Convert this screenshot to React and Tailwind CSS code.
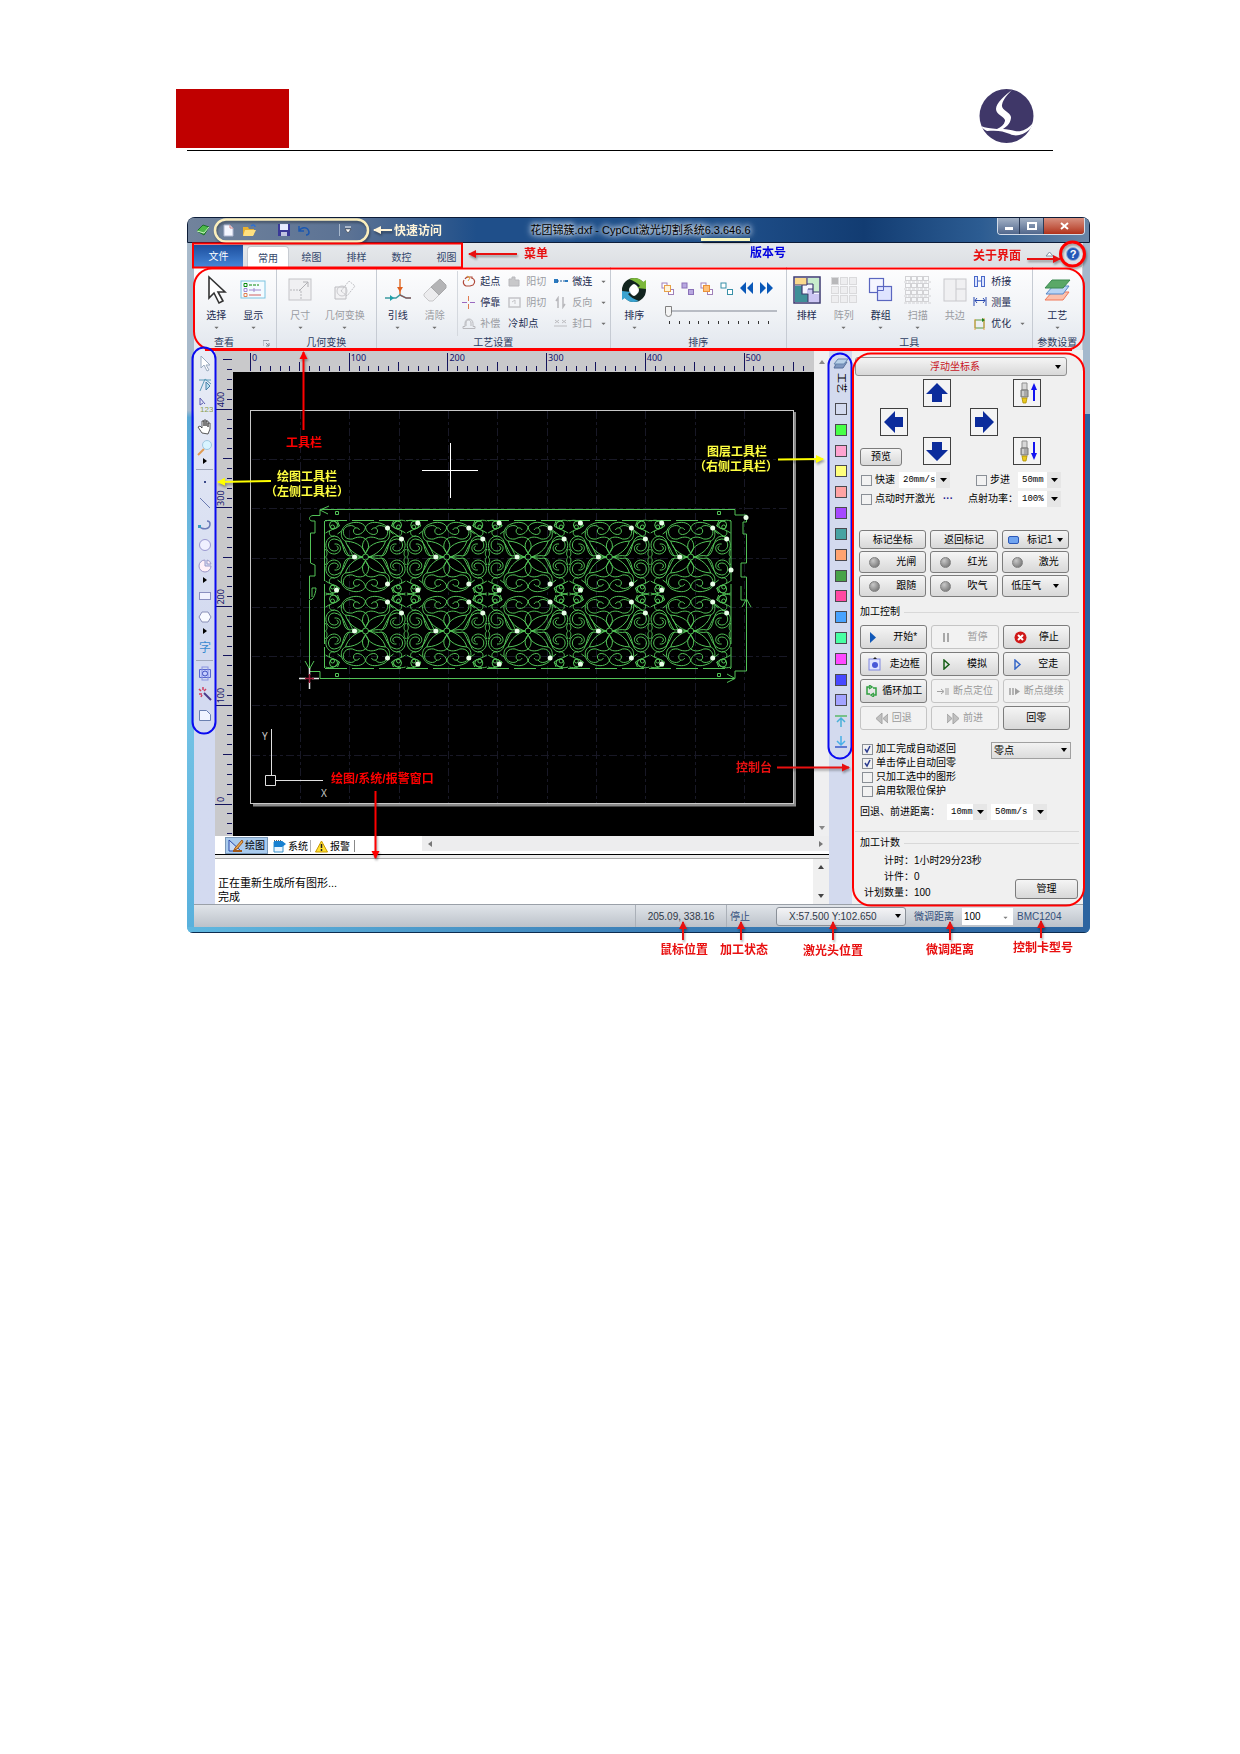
import { useState } from "react";
import { FaCaretDown } from "react-icons/fa";

const swatches = [
  "#d3daee", "#48ff48", "#ffa3d0", "#ffff7c", "#ffa3a3", "#a648ff", "#48a3a3", "#ffa370",
  "#48a348", "#ff48a3", "#48a3ff", "#48ffa3", "#ff48ff", "#4848ff", "#a3a3ff",
];

// rulers: 100 units are 98.7px wide
const hTicks = Array.from({ length: 57 }, (_, i) => i);
const vTicks = Array.from({ length: 49 }, (_, i) => i - 3);
const tickLen = (i) => (i % 10 === 0 ? 18 : i % 5 === 0 ? 9 : 5);

const tiles = [];
for (let r = 0; r < 2; r++) {
  for (let c = 0; c < 5; c++) {
    tiles.push({ x: 365.5 + c * 81.3, y: 557 + r * 74, c, r });
  }
}

function Icon({ w = 24, h = 24, children, className = "" }) {
  return (
    <svg width={w} height={h} viewBox={`0 0 ${w} ${h}`} fill="none" className={`shrink-0 ${className}`} aria-hidden="true">
      {children}
    </svg>
  );
}

/* ---------- ribbon icons ---------- */
const CursorIcon = () => (
  <Icon w={24} h={30}><path d="M5 2v21l5-5 5 10 4-2-5-9h7z" fill="#fff" stroke="#333" strokeWidth="1.6" /></Icon>
);
const ShowIcon = () => (
  <Icon w={26} h={20}>
    <rect x="1" y="1" width="24" height="17" fill="#f4fbff" stroke="#7cc3e0" />
    <path d="M4 3.500h3v3h-3z" stroke="#0a8a0a" /><path d="M9 5h3m1 0h3m1 0h2" stroke="#0a8a0a" />
    <path d="M4 8.500h3v3h-3z" stroke="#a08ad0" /><path d="M9 10h12M14 8v4" stroke="#a08ad0" />
    <path d="M4 13.500h3v3h-3z" stroke="#e08050" /><path d="M9 15h12" stroke="#d06060" />
  </Icon>
);
const SizeIcon = () => (
  <Icon w={24} h={24}>
    <rect x="1" y="1" width="22" height="21" fill="#f0f0f2" stroke="#c4c4c8" />
    <path d="M2 12h11v10" stroke="#b8b8bc" strokeDasharray="2 1" /><path d="M11 13l9-9m-5 0h5v5" stroke="#b0b0b4" />
  </Icon>
);
const TransformIcon = () => (
  <Icon w={24} h={24}>
    <path d="M2 9h11v12h-11z" fill="#f2f2f4" stroke="#bcbcc0" />
    <path d="M8 13l8-10 6 5-8 10z" stroke="#c0c0c4" strokeDasharray="2 1" />
    <circle cx="9" cy="13" r="5" stroke="#cacace" />
  </Icon>
);
const LeadIcon = () => (
  <Icon w={28} h={24}>
    <path d="M16 1v16" stroke="#e07030" strokeWidth="1.500" /><path d="M13 9h6l-3 5z" fill="#e06020" />
    <path d="M1 20h11l4-3 6 3h5" stroke="#3a9aa0" strokeWidth="1.500" /><path d="M16 17l6 3h5" stroke="#b04040" />
    <path d="M6 17v6l4-3z" fill="#20a0a8" />
  </Icon>
);
const EraserIcon = () => (
  <Icon w={26} h={26}>
    <path d="M2 17l7-7 8 8-6 6h-4l-5-5z" fill="#ececee" stroke="#c8c8ca" /><path d="M9 10l9-8 6 6v3l-7 7z" fill="#b4b4b6" stroke="#a8a8aa" />
  </Icon>
);
const SortIcon = () => (
  <Icon w={26} h={26}>
    <circle cx="13" cy="13" r="8.500" stroke="#12241f" strokeWidth="7" />
    <path d="M8 2c6-2 11-1 14 3l3-2v9l-9-1 3-2c-2-3-6-5-11-7z" fill="#7cb83a" />
    <path d="M18 24c-6 2-11 1-14-3l-3 2v-9l9 1-3 2c2 3 6 5 11 7z" fill="#3ba3d0" />
    <ellipse cx="13" cy="13" rx="3.500" ry="6" fill="#fff" />
  </Icon>
);
const NestIcon = () => (
  <Icon w={28} h={28}>
    <rect x="1" y="1" width="26" height="26" fill="#f4f4ff" stroke="#3c3a70" strokeWidth="1.500" />
    <path d="M2 2h12v7h-12z" fill="#fbd98c" /><path d="M15 2h11v14h-6v-8h-5z" fill="#c8eccc" />
    <path d="M2 10h7v8h6v8h-13z" fill="#3f8f98" /><path d="M14 13h6v5h6v8h-10v-9h-2z" fill="#cdc6f4" />
    <path d="M2 9h12M9 9v9h6v8M14 2v7M20 8v8h6M14 8h6M15 13h5v5" stroke="#3c3a70" strokeWidth="1.200" />
  </Icon>
);
const ArrayIcon = () => (
  <Icon w={26} h={26}>
    {[0, 9, 18].map((y) => [0, 9, 18].map((x) => (
      <rect key={`${x}-${y}`} x={x + 0.5} y={y + 0.5} width="7" height="7" fill={x + y === 0 ? "#b8b8ba" : "#eeeef0"} stroke="#dadadc" />
    )))}
  </Icon>
);
const GroupIcon = () => (
  <Icon w={26} h={26}>
    <rect x="1.500" y="1.500" width="14" height="14" fill="#f4f5ff" stroke="#5a66c0" strokeWidth="1.200" />
    <rect x="9.500" y="9.500" width="14" height="14" fill="#dfe4ff" stroke="#5a66c0" strokeWidth="1.200" />
    <path d="M9.500 13.500h6v-4" stroke="#5a66c0" />
  </Icon>
);
const ScanIcon = () => (
  <Icon w={28} h={28}>
    {[1, 8, 15, 22].map((y) => (
      <g key={y} stroke="#d2d2d5"><path d={`M0 ${y + 5}h28`} strokeDasharray="3 1" />
        {[1, 7, 13, 19].map((x) => <rect key={x} x={x + 0.5} y={y - 0.5} width="5" height="4" />)}</g>
    ))}
  </Icon>
);
const SharedEdgeIcon = () => (
  <Icon w={24} h={24}><rect x="1" y="1" width="22" height="22" fill="#f0f0f2" stroke="#c8c8cc" /><path d="M13 1v22M13 11h10" stroke="#c8c8cc" /></Icon>
);
const LayersIcon = () => (
  <Icon w={28} h={24}>
    <path d="M9 14h17l-6 8h-18z" fill="#fbc0ac" stroke="#f07858" /><path d="M10 8h16l-6 8h-17z" fill="#b8d4f4" stroke="#5888c8" />
    <path d="M9 2h18l-7 8h-18z" fill="#5aa868" stroke="#3a8a50" />
  </Icon>
);

const smallIcons = {
  起点: <><path d="M3 4a4 4 0 0 1 4-2h3v2M10 3a4 4 0 0 1 1 7l-3 1h-4a4 4 0 0 1-2-6" stroke="#b04a3a" strokeWidth="1.200" /><path d="M5 1l3 2-2 3" stroke="#e0a030" /></>,
  停靠: <><path d="M0 6.500h5m3 0h5" stroke="#9a6ac0" /><path d="M6.500 0v5m0 3v5" stroke="#e07a50" /></>,
  补偿: <path d="M1 11.500h12v-2h-2v-3c0-6-8-6-8 0v3h-2zM4 9v-3c0-4 5-4 5 0v3" stroke="#b8b8bc" />,
  阳切: <path d="M1 4h3v-2h3v3h4v6h-10z" fill="#c8c8ca" stroke="#b8b8bc" />,
  阴切: <><rect x="1" y="2" width="11" height="9" stroke="#c4c4c8" strokeWidth="1.500" /><path d="M4 6l3-2v4" stroke="#c4c4c8" /></>,
  微连: <><path d="M0 4h4v4h-4zM11 5h3v2h-3z" fill="#2a7ac0" /><path d="M3 6h9" stroke="#1a5a9a" strokeDasharray="2 1" /></>,
  反向: <path d="M4 12v-10l-2 3M9 1v10l2-3" stroke="#b8b8bc" strokeWidth="1.500" />,
  封口: <path d="M1 3l4 3m0-3l-4 3M8 3l4 3m0-3l-4 3M0 9h13" stroke="#bcbcc0" />,
  桥接: <><rect x="1.500" y="1.500" width="3" height="10" fill="#dce4ff" stroke="#4a68c8" /><rect x="8.500" y="1.500" width="3" height="10" fill="#dce4ff" stroke="#4a68c8" /><path d="M5 6h3" stroke="#4a68c8" /></>,
  测量: <path d="M1 1v9M13 1v9M2 4.500h10M4 2l-2 2.500 2 2.500M10 2l2 2.500-2 2.500" stroke="#2a4ab0" />,
  优化: <><path d="M2 3h9v8h-9z" stroke="#5a9a40" /><path d="M11 1v12M2 2v11" stroke="#e8a040" /><path d="M9 1l3 2-3 2" fill="#208020" /></>,
};

function Big({ icon, label, off, arrow = true, wide }) {
  return (
    <button type="button" className={`mt-1 flex flex-col items-center ${wide ? "w-[52px]" : "w-[37px]"} ${off ? "text-[#9a9ca2]" : "text-[#1c2c50]"}`}>
      <span className="flex h-[30px] items-center">{icon}</span>
      <span className="mt-1 leading-[14px]">{label}</span>
      {arrow && <FaCaretDown size={7} className="mt-px text-[#707070]" />}
    </button>
  );
}

function Small({ label, off, arrow, noIcon }) {
  return (
    <button type="button" className={`flex h-[21px] items-center gap-1 whitespace-nowrap ${off ? "text-[#9a9ca2]" : "text-[#1c2c50]"}`}>
      {!noIcon && <Icon w={14} h={13}>{smallIcons[label]}</Icon>}
      {label}
      {arrow && <FaCaretDown size={7} className="ml-1 text-[#707070]" />}
    </button>
  );
}

function Group({ title, size, launcher, children }) {
  return (
    <section className={`flex shrink-0 grow flex-col border-r border-[#c6cbd3] ${size}`}>
      <div className="flex h-[69px] justify-center pt-1">{children}</div>
      <div className={`flex items-center ${launcher ? "justify-between pr-1.5 pl-5" : "justify-center"}`}>
        <h2 className="leading-[14px] whitespace-nowrap text-[#2c3c60]">{title}</h2>
        {launcher && <button type="button" aria-label="查看选项"><Icon w={7} h={7}><path d="M0 6V.500h6" stroke="#98a0ac" /><path d="M3 3l3 3m0-3v3h-3" stroke="#808894" /></Icon></button>}
      </div>
    </section>
  );
}

function MiniSort({ ends, mid, fill, endFill = "#ffffff" }) {
  return (
    <button type="button" aria-label="排序方式">
      <Icon w={13} h={13}>
        <rect x="1" y="1" width="5" height="5" fill={endFill} stroke={ends} />
        <rect x="7.500" y="7.500" width="5" height="5" fill={endFill} stroke={ends} />
        {mid && <rect x="3.500" y="3.500" width="6" height="6" fill={fill} stroke={mid} />}
      </Icon>
    </button>
  );
}

function Ribbon() {
  const [speed, setSpeed] = useState(0);
  return (
    <div className="flex h-[83px] bg-linear-to-b from-[#fdfdfe] via-[#f2f4f7] to-[#e2e7ee] text-[10px]">
      <Group title="查看" size="basis-[82px]" launcher>
        <Big icon={<CursorIcon />} label="选择" />
        <Big icon={<ShowIcon />} label="显示" />
      </Group>
      <Group title="几何变换" size="basis-[100px]">
        <Big icon={<SizeIcon />} label="尺寸" off />
        <Big icon={<TransformIcon />} label="几何变换" off wide />
      </Group>
      <Group title="工艺设置" size="basis-[233px]">
        <Big icon={<LeadIcon />} label="引线" />
        <Big icon={<EraserIcon />} label="清除" off />
        <div className="ml-1 flex gap-2 border-l border-[#d4d8de] pl-1">
          <div>
            <Small label="起点" />
            <Small label="停靠" />
            <Small label="补偿" off />
          </div>
          <div>
            <Small label="阳切" off />
            <Small label="阴切" off />
            <Small label="冷却点" noIcon />
          </div>
          <div>
            <Small label="微连" arrow />
            <Small label="反向" off arrow />
            <Small label="封口" off arrow />
          </div>
        </div>
      </Group>
      <Group title="排序" size="basis-[176px]">
        <Big icon={<SortIcon />} label="排序" />
        <div className="mt-1 mr-2 ml-2 w-[112px]">
          <div className="flex h-[26px] items-center justify-between">
            <MiniSort ends="#a080b8" mid="#e8a048" fill="#fff4d8" />
            <MiniSort ends="#8a70b8" endFill="#b8a8e0" />
            <MiniSort ends="#a080b8" mid="#e89038" fill="#ffc078" />
            <MiniSort ends="#3890a8" />
            <button type="button" aria-label="上一个"><Icon w={13} h={12}><path d="M6 0v12l-6-6zM13 0v12l-6-6z" fill="#0a58b8" /></Icon></button>
            <button type="button" aria-label="下一个"><Icon w={13} h={12}><path d="M0 0v12l6-6zM7 0v12l6-6z" fill="#0a58b8" /></Icon></button>
          </div>
          <input
            type="range"
            aria-label="排序进度"
            min="0"
            max="10"
            value={speed}
            onChange={(e) => setSpeed(Number(e.target.value))}
            className="mt-1 ml-1 block h-3 w-full appearance-none bg-[linear-gradient(#b8bcc4,#b8bcc4)] bg-[length:100%_2px] bg-center bg-no-repeat [&::-webkit-slider-thumb]:h-[11px] [&::-webkit-slider-thumb]:w-[7px] [&::-webkit-slider-thumb]:appearance-none [&::-webkit-slider-thumb]:rounded-b-md [&::-webkit-slider-thumb]:border [&::-webkit-slider-thumb]:border-[#808080] [&::-webkit-slider-thumb]:bg-[#f4f4f4]"
          />
          <div className="mt-1 ml-1 flex justify-between px-1">
            {hTicks.slice(0, 11).map((i) => <i key={i} className="h-[3px] w-px bg-[#333]" />)}
          </div>
        </div>
      </Group>
      <Group title="工具" size="basis-[245px]">
        <Big icon={<NestIcon />} label="排样" arrow={false} />
        <Big icon={<ArrayIcon />} label="阵列" off />
        <Big icon={<GroupIcon />} label="群组" />
        <Big icon={<ScanIcon />} label="扫描" off />
        <Big icon={<SharedEdgeIcon />} label="共边" off arrow={false} />
        <div className="mr-1">
          <Small label="桥接" />
          <Small label="测量" />
          <Small label="优化" arrow />
        </div>
      </Group>
      <Group title="参数设置" size="basis-[50px]">
        <Big icon={<LayersIcon />} label="工艺" />
      </Group>
    </div>
  );
}

/* ---------- title bar and menu ---------- */
function TitleBar() {
  return (
    <header className="flex h-[26px] items-center rounded-t-md border border-[#0c1c38] bg-[linear-gradient(90deg,#71839c_0%,#5b7294_18%,#1f4f8a_32%,#1f4f8a_60%,#123c72_75%,#2c5c92_88%,#6885a5_100%)] text-[10px]">
      <div className="flex flex-1 items-center pl-2">
        <Icon w={14} h={14}><path d="M1 8l6-6 6 2-5 8z" fill="#4db848" stroke="#187028" /><path d="M1 8l7 2 5-6" stroke="#c8f0c0" /></Icon>
        <button type="button" aria-label="新建" className="ml-3"><Icon w={12} h={14}><path d="M2 2h6l3 3v8h-9z" fill="#f4f6ff" stroke="#b0b8d0" /><path d="M8 2v3h3" stroke="#d08080" /></Icon></button>
        <button type="button" aria-label="打开" className="ml-2"><Icon w={15} h={14}><path d="M1 4h5l1 2h5v6h-11z" fill="#e8b030" /><path d="M3 7h11l-3 6h-10z" fill="#ffe080" /><path d="M9 3c2-2 4-1 4 1" stroke="#3070d0" strokeWidth="1.500" /></Icon></button>
        <button type="button" aria-label="保存" className="ml-5"><Icon w={14} h={14}><path d="M1 1h12v12h-12z" fill="#3a3a98" /><path d="M3 1h8v6h-8z" fill="#e8ecff" /><path d="M4 9h6v4h-6z" fill="#c0c4e0" /></Icon></button>
        <button type="button" aria-label="撤销" className="ml-1.5"><Icon w={14} h={12}><path d="M2 2v5h5M2 7c3-5 9-4 10 1 0 2-1 3-3 3" stroke="#1c58b0" strokeWidth="1.500" /></Icon></button>
        <span className="ml-7 h-3 w-px bg-[#a8b8cc]" />
        <button type="button" aria-label="自定义" className="ml-1"><Icon w={8} h={8}><path d="M1 1h6" stroke="#fff" /><path d="M1 3h6l-3 4z" fill="#fff" stroke="#222" strokeWidth="0.500" /></Icon></button>
      </div>
      <h1 className="text-[11px] leading-4 whitespace-nowrap text-black [text-shadow:0_0_5px_#ffffff,0_0_6px_#dce8f4,0_0_9px_#c8d8ec]">花团锦簇.dxf - CypCut激光切割系统6.3.646.6</h1>
      <div className="flex flex-1 justify-end self-start pr-1">
        <div className="flex h-[17px] overflow-hidden rounded-b border border-t-0 border-[#d4dce8]">
          <button type="button" aria-label="最小化" className="flex w-[22px] items-center justify-center border-r border-[#2c3c58] bg-linear-to-b from-[#a4b2c6] to-[#52688c]"><i className="mt-1 h-[3px] w-2 bg-white" /></button>
          <button type="button" aria-label="最大化" className="flex w-6 items-center justify-center border-r border-[#2c3c58] bg-linear-to-b from-[#a4b2c6] to-[#52688c]"><i className="h-2 w-[10px] border-2 border-white" /></button>
          <button type="button" aria-label="关闭" className="flex w-10 items-center justify-center bg-linear-to-b from-[#d89080] to-[#b03018]"><Icon w={9} h={8}><path d="M1 1l7 6M8 1l-7 6" stroke="#fff" strokeWidth="2" /></Icon></button>
        </div>
      </div>
    </header>
  );
}

function MenuTabs() {
  return (
    <nav className="flex h-6 items-end bg-linear-to-b from-[#e6e9ec] to-[#dcdfe3] text-[10px] text-[#34486c]">
      <button type="button" className="mr-1 h-[22px] w-[49px] bg-linear-to-b from-[#1d4f9e] to-[#4686d8] text-white">文件</button>
      <button type="button" className="h-[21px] w-[42px] rounded-t-sm border border-b-0 border-[#c8ccd2] bg-white pt-0.5">常用</button>
      {["绘图", "排样", "数控", "视图"].map((t) => (
        <button key={t} type="button" className="h-[21px] w-[45px] pt-0.5">{t}</button>
      ))}
      <span className="flex-1" />
      <button type="button" aria-label="收起" className="mr-3 mb-2.5"><Icon w={9} h={6}><path d="M1 5l3.500-4 3.500 4z" fill="#fff" stroke="#8090a0" /></Icon></button>
      <button type="button" aria-label="关于" className="mr-[3px] mb-1.5 size-[14px] rounded-full border border-[#9ab4dc] bg-[#2458b8] text-[11px] leading-3 font-bold text-white">?</button>
    </nav>
  );
}

/* ---------- side tool bars ---------- */
const tools = [
  ["选择", <path d="M4 1v12l3-3 3 6 2-1-3-5h4z" fill="#fff" stroke="#9aaabe" />],
  ["节点", <><path d="M2 4h12M3 15L8 3l6 5" stroke="#5a9ab8" /><path d="M9 6v8l4-4z" fill="#b8e0f0" stroke="#4a80a8" /></>],
  ["次序", <><path d="M3 1v7l3-2M3 1l5 6" stroke="#5a5ab0" /><text x="3" y="15" fontSize="8" fill="#8aa050">123</text></>],
  ["平移", <path d="M5 15L1 9l2-1 2 2V3h2v5-6h2v6-5h2v6-4h2v6l-2 5z" fill="#fff" stroke="#333" strokeWidth="0.800" />],
  ["缩放", <><path d="M1 16l6-6" stroke="#e09a50" strokeWidth="2" /><circle cx="10" cy="6" r="4.500" fill="#d8f4ff" stroke="#a0c8e0" /></>, 1],
  "-",
  ["点", <rect x="7" y="7" width="2" height="2" fill="#3a4a8a" />],
  ["直线", <path d="M3 3l10 10" stroke="#6a7ab0" />],
  ["圆弧", <><path d="M2 10c3 4 11 4 11-2 0-2-1-3-3-3" stroke="#6a7ab8" strokeWidth="1.500" /><path d="M1 9h3v3h-3z" fill="#3a9ac0" /></>],
  ["圆", <circle cx="8" cy="8" r="5.500" fill="#f0f0ff" stroke="#9a98d0" />],
  ["扇形", <path d="M8 8V2a6 6 0 1 0 6 6zM10 6V2a5 5 0 0 1 4 4z" fill="#fff0f8" stroke="#9a98c8" />, 1],
  ["矩形", <rect x="2.500" y="4.500" width="11" height="7" fill="#f0f2ff" stroke="#8a90c0" />],
  ["多边形", <path d="M5 3h6l3 5-3 5h-6l-3-5z" fill="#f8faff" stroke="#8a90b8" />, 1],
  ["文字", <text x="2" y="13" fontSize="12" fill="#3a8ad0">字</text>],
  "-",
  ["阵列", <><path d="M2.500 4.500h11v8h-11z" fill="#c8d0ff" stroke="#5a68d0" /><rect x="5" y="2" width="6" height="13" stroke="#8a94e0" /><circle cx="8" cy="8.500" r="2.500" stroke="#4050c0" /></>],
  ["魔棒", <><path d="M7 7l7 7" stroke="#4a3a8a" strokeWidth="2" /><path d="M2 3l2 2M6 1v3M2 8h3M9 3l-2 2M4 11l1-2" stroke="#d04060" strokeWidth="1.500" /></>],
  ["倒角", <path d="M2.500 3.500h7l4 4v6h-11z" fill="#f0f4ff" stroke="#6a80b0" />],
];

function ToolBar() {
  return (
    <aside className="flex w-[21px] shrink-0 flex-col items-center bg-linear-to-b from-[#e8ecf6] via-[#d3daf0] to-[#d3daf0] pt-[3px]">
      {tools.map((t, i) =>
        t === "-" ? (
          <hr key={i} className="my-0.5 w-[17px] border-[#a0a8bc]" />
        ) : (
          <div key={i} className="flex flex-col items-center">
            <button type="button" aria-label={t[0]} className="flex h-[21px] items-center"><Icon w={16} h={17}>{t[1]}</Icon></button>
            {t[2] && <span className="h-[9px]"><Icon w={4} h={6}><path d="M0 0v6l4-3z" fill="#000" /></Icon></span>}
          </div>
        )
      )}
    </aside>
  );
}

function LayerBar() {
  return (
    <aside className="flex w-[23px] shrink-0 flex-col items-center bg-[#d3daee] pt-2 text-[10px]">
      <Icon w={15} h={11}><path d="M4 4h10l-4 6h-9z" fill="#8098c0" stroke="#58709c" /><path d="M5 1h10l-4 5h-10z" fill="#b8d0e8" stroke="#6888b0" /></Icon>
      <span className="mt-1 h-[26px] leading-3 [text-orientation:sideways] [writing-mode:vertical-rl]">工艺</span>
      <div className="mt-1 flex h-[345px] flex-col items-center justify-between">
        {swatches.map((c) => (
          <button key={c} type="button" aria-label={`图层 ${c}`} className="size-3 border border-[#4a4a50]" style={{ backgroundColor: c }} />
        ))}
        <button type="button" aria-label="上移"><Icon w={12} h={12}><path d="M0 1h12" stroke="#58b868" strokeWidth="1.500" /><path d="M6 12V3M2 7l4-4 4 4" stroke="#48b0d8" strokeWidth="1.500" /></Icon></button>
        <button type="button" aria-label="下移"><Icon w={12} h={12}><path d="M0 11h12" stroke="#3858c8" strokeWidth="1.500" /><path d="M6 0v9M2 5l4 4 4-4" stroke="#48b0e8" strokeWidth="1.500" /></Icon></button>
      </div>
    </aside>
  );
}

/* ---------- drawing ---------- */
function Drawing() {
  return (
    <svg viewBox="215 350 599 486" className="block h-auto w-full" fill="none" fontFamily="'Noto Sans', sans-serif">
      <defs>
        <g id="quarter">
          <path d="M0-3C-1-8-6-15-20-16C-18-8-10-2-3 0" />
          <path d="M0-4C-4-8-4-14 0-18" />
          <path d="M-3 0C-9-1-12-2-16-1C-25-2-20-20-31-21C-43-20-42-3-31-3C-23-4-23-14-31-13" />
          <path d="M-16-1C-21-5-21-17-31-18C-39-18-39-6-31-6C-27-6-26-10-29-11" />
          <path d="M-20-16C-26-18-26-30-17-33C-10-36-3-35 0-30C-1-22-12-20-12-26C-12-30-7-30-6-27" />
          <path d="M0-18C-4-21-9-20-13-18C-20-17-23-22-22-27C-20-32-12-33-10-29" />
          <circle cx="-32" cy="-32" r="4" /><circle cx="-33" cy="-30" r="2" />
          <path d="M-40-24C-36-27-30-28-26-31L-28-36M-40-36C-34-38-30-36-26-31M-40-8C-38-4-38-2-40 0" />
          <path d="M-24-26L-28-23M-36-26C-37-22-34-20-31-21" />
        </g>
        <g id="tile">
          <use href="#quarter" />
          <use href="#quarter" transform="scale(-1 1)" />
          <use href="#quarter" transform="scale(1 -1)" />
          <use href="#quarter" transform="scale(-1 -1)" />
          <circle r="3" />
        </g>
      </defs>
      <rect x="215" y="350" width="599" height="486" fill="#c9c9cb" />
      <rect x="233" y="372" width="581" height="464" fill="#000" />

      <g stroke="#14145c">
        {hTicks.map((i) => <path key={i} d={`M${Math.round(251 + i * 9.87) - 0.5} 371v-${tickLen(i)}`} />)}
        {vTicks.map((i) => <path key={i} d={`M232 ${Math.round(804.5 - i * 9.87) - 0.5}h-${i < 46 ? tickLen(i) : 5}`} />)}
      </g>
      <g fill="#14146c" fontSize="9">
        {[0, 1, 2, 3, 4, 5].map((n) => <text key={n} x={252 + n * 98.7} y="361">{n * 100}</text>)}
        {[0, 1, 2, 3, 4].map((n) => (
          <text key={n} transform={`translate(224 ${802 - n * 98.7}) rotate(-90)`}>{n * 100}</text>
        ))}
      </g>

      <g stroke="#181826" strokeDasharray="8 3 3 3">
        {[1, 2, 3, 4, 5, 6, 7, 8, 9, 10].map((n) => <path key={n} d={`M${Math.round(250.5 + n * 49.35)}.5 411V803`} />)}
        {[1, 2, 3, 4, 5, 6, 7].map((n) => <path key={n} d={`M252 ${Math.round(804 - n * 49.3)}.5H790`} />)}
      </g>
      <path d="M253 805h541.500V412" stroke="#8a8a8a" strokeWidth="3" />
      <rect x="250.500" y="410.500" width="543" height="393" stroke="#c8c8c8" />

      <g stroke="#52c257">
        <path d="M320 509.500H735V515H746.500V522H743V534H746.500V563H741V577H746.500V600H741V586M746.500 600V671H735V678.500H320V671.500H309" />
        <path d="M320 509.500V515.500H313C308 516 309 521 312 521H315V533H310.500V563L315 565V576H309.500V599C313 602 316 592 316 588H312V597M309.500 600V668" />
        <path d="M329 506L320 510l8 4M305 661l4.500 8 4.500-8M727 674l8 4.500-8 4M742 607l4.500-8 4.500 8" />
        <path d="M324.500 521V668M731 521V668" strokeDasharray="60 3" />
        <path d="M325 520.500H731M325 668.500H731" strokeDasharray="22 5" />
        <path d="M335.500 511.500h3v3h-3zM335.500 673.500h3v3h-3zM717.500 511.500h3v3h-3zM717.500 673.500h3v3h-3z" />
        {tiles.map((t) => <use key={`${t.x}-${t.y}`} href="#tile" x={t.x} y={t.y} />)}
        {tiles.map((t) => <path key={`${t.x}-${t.y}-lead`} d={`M${t.x - 18} ${t.y - 12}l6 12M${t.x + 23} ${t.y - 28}l12 9`} />)}
      </g>
      <g fill="#e8ffe8">
        {tiles.map((t) => (
          <g key={`${t.x}-${t.y}`} transform={`translate(${t.x} ${t.y})`}>
            <circle cx="-11" cy="0" r="2.500" />
            <circle cx="22" cy="-29" r="2.500" />
            <circle cx="36" cy="-18" r="2.500" />
            <circle cx="22" cy="27" r="2.500" />
            {(t.r === 0 || t.c > 0) && <circle cx="-29" cy="33" r="2.500" />}
            {t.r === 0 && t.c > 0 && <circle cx="-29" cy="-34" r="2.500" />}
          </g>
        ))}
        <circle cx="746" cy="517.500" r="2.500" />
        <circle cx="731" cy="570" r="2.500" />
      </g>

      <path d="M422 470.500H478M450.500 443V498" stroke="#fff" />
      <path d="M299 678.500h7m6 0h7M309.500 668v7m0 7v7" stroke="#e8e8e8" strokeWidth="1.500" />
      <path d="M305 678.500h9M309.500 674v9" stroke="#a02040" strokeWidth="1.500" />
      <path d="M271.500 729V775M276 780.500H323M265.500 775.500h10v10h-10z" stroke="#e0e0e0" />
      <g fill="#c8c8c8" fontSize="10"><text x="262" y="740">Y</text><text x="321" y="797">X</text></g>
    </svg>
  );
}

function Console() {
  return (
    <div className="flex flex-1 flex-col bg-white">
      <div className="flex h-[19px] border-b border-black text-[10px]">
        <div className="flex items-end pl-[10px]">
          <button type="button" className="flex h-[17px] items-center gap-px border border-[#7a98b8] bg-[#a9cbee] px-0.5"><Icon w={16} h={14}><path d="M1 1v11h12z" fill="#c8dcf8" stroke="#2848a8" /><path d="M14 1l-7 8-1 2 3-1 6-7z" fill="#e8a850" stroke="#a05818" /><path d="M5 12h9" stroke="#a05818" strokeWidth="2" /></Icon>绘图</button>
          <button type="button" className="mb-0.5 ml-1 flex h-3 items-center gap-0.5 border-r border-[#b0b0b0] pr-0.5"><Icon w={14} h={14}><path d="M2 3h9v10h-9z" fill="#e8f4ff" stroke="#3890c8" /><path d="M2 2h8l4 3-4 3h-8z" fill="#1880d0" /><path d="M2 1.500h8" stroke="#666" strokeDasharray="1 1" /></Icon>系统</button>
          <button type="button" className="mb-0.5 ml-1 flex h-3 items-center gap-0.5 border-r border-[#888] pr-1"><Icon w={13} h={13}><path d="M6.500 1l6 11h-12z" fill="#ffe030" stroke="#c89800" /><path d="M6.500 4v4m0 1v2" stroke="#222" strokeWidth="1.500" /></Icon>报警</button>
        </div>
        <div className="ml-[67px] flex h-[15px] flex-1 items-center justify-between bg-[#ededee] px-1.5">
          <Icon w={4} h={6}><path d="M4 0v6l-4-3z" fill="#777" /></Icon>
          <Icon w={4} h={6}><path d="M0 0v6l4-3z" fill="#777" /></Icon>
        </div>
      </div>
      <div className="h-1 border-b border-[#a8a8a8] bg-[#ececec]" />
      <div className="flex flex-1">
        <p className="flex-1 pt-[17px] pl-[3px] text-[11px] leading-[14px] text-black">正在重新生成所有图形...<br />完成</p>
        <div className="flex w-4 flex-col items-center justify-between bg-[#f0f0f0] py-1.5">
          <Icon w={6} h={4}><path d="M0 4h6l-3-4z" fill="#444" /></Icon>
          <Icon w={6} h={4}><path d="M0 0h6l-3 4z" fill="#444" /></Icon>
        </div>
      </div>
    </div>
  );
}

/* ---------- control panel ---------- */
function Drop({ label, value, size = "" }) {
  return (
    <span className={`relative flex h-4 items-center bg-white ${size}`}>
      <select aria-label={label} className="h-full w-full appearance-none pl-1 font-['Liberation_Mono','Noto_Sans_CJK_SC',monospace] text-[9px] leading-4">
        <option>{value}</option>
      </select>
      <span className="pointer-events-none absolute right-0 flex h-full w-[14px] items-center justify-center bg-[#e6e6e6]"><Icon w={7} h={4}><path d="M0 0h7l-3.500 4z" fill="#000" /></Icon></span>
    </span>
  );
}

function Check({ label, on }) {
  return (
    <label className="flex h-[14px] items-center gap-[3px] whitespace-nowrap">
      <span className="grid place-items-center">
        <input type="checkbox" defaultChecked={on} className="peer size-[11px] appearance-none border border-[#8a8f96] bg-[#f2f2f2] [grid-area:1/1]" />
        <svg width="9" height="9" viewBox="0 0 9 9" fill="none" className="pointer-events-none hidden [grid-area:1/1] peer-checked:block"><path d="M2 4l2 3 3-6" stroke="#2c3c90" strokeWidth="1.500" /></svg>
      </span>
      {label}
    </label>
  );
}

function Btn({ children, off, h = "h-6" }) {
  return (
    <button type="button" className={`flex items-center justify-center gap-1 rounded-[3px] border whitespace-nowrap ${h} ${off ? "border-[#c4c4c4] bg-[#f2f2f2] text-[#9a9a9a]" : "border-[#7c7c7c] bg-linear-to-b from-[#f5f5f5] to-[#d8d8d8] text-black"}`}>
      {children}
    </button>
  );
}

function Arrow({ label, turn, pos }) {
  return (
    <button type="button" aria-label={label} className={`flex size-7 items-center justify-center border border-[#404040] bg-[#f4f4f4] ${pos}`}>
      <svg width="24" height="22" viewBox="0 0 24 22" className={turn}><path d="M12 1l11 11h-6v8h-10v-8h-6z" fill="#0c2c9c" /></svg>
    </button>
  );
}

function Head({ label, down, pos }) {
  return (
    <button type="button" aria-label={label} className={`flex size-7 items-center justify-center border border-[#404040] bg-[#f4f4f4] ${pos}`}>
      <Icon w={22} h={24}>
        <path d="M6 2h5v7h-5z" fill="#d8d8d8" stroke="#909090" /><path d="M5 9h7v7h-7z" fill="#a8a8a8" stroke="#787878" /><path d="M7 10v5" stroke="#f0f0f0" /><path d="M6 17h5l-1 5h-3z" fill="#e8c820" stroke="#b09000" strokeWidth="0.800" />
        <path d={down ? "M18 3v13" : "M18 20V7"} stroke="#1414f0" strokeWidth="2" /><path d={down ? "M15 14h6l-3 7z" : "M15 9h6l-3-7z"} fill="#1414f0" />
      </Icon>
    </button>
  );
}

const Lamp = () => <span className="mr-3 size-[11px] rounded-full border border-[#808080] bg-radial-[at_35%_30%] from-[#c8c8c8] to-[#686868]" />;
const Caret = () => <Icon w={6} h={4}><path d="M0 0h6l-3 4z" fill="#000" /></Icon>;

function ControlPanel() {
  return (
    <section className="w-[231px] shrink-0 bg-[#f0f0f0] pr-1 pl-[3px] text-[10px] leading-[14px] text-black">
      <div className="relative mt-[7px] mr-3">
        <select aria-label="坐标系" className="h-[19px] w-full appearance-none rounded-[3px] border border-[#909090] bg-linear-to-b from-[#f5f5f5] to-[#d8d8d8] pr-3 text-center text-[#c8141e] [text-align-last:center]">
          <option>浮动坐标系</option>
        </select>
        <span className="pointer-events-none absolute top-2 right-1.5"><Caret /></span>
      </div>

      <div className="mt-[3px] ml-[5px] grid grid-cols-[63px_47px_43px_28px] grid-rows-[29px_29px_29px]">
        <Arrow label="上" turn="" pos="col-start-2 row-start-1" />
        <Head label="抬头" pos="col-start-4 row-start-1" />
        <Arrow label="左" turn="-rotate-90" pos="col-start-1 row-start-2 ml-5" />
        <Arrow label="右" turn="rotate-90" pos="col-start-3 row-start-2" />
        <button type="button" className="col-start-1 row-start-3 h-[18px] w-[42px] self-end rounded-[3px] border border-[#7c7c7c] bg-linear-to-b from-[#f5f5f5] to-[#d8d8d8]">预览</button>
        <Arrow label="下" turn="rotate-180" pos="col-start-2 row-start-3" />
        <Head label="落头" down pos="col-start-4 row-start-3" />
      </div>

      <div className="mt-1.5 flex h-4 items-center justify-between pr-[18px] pl-1.5">
        <div className="flex items-center gap-1"><Check label="快速" /><Drop label="点动速度" value="20mm/s" size="w-[51px]" /></div>
        <div className="flex items-center gap-2"><Check label="步进" /><Drop label="步进距离" value="50mm" size="w-[43px]" /></div>
      </div>
      <div className="mt-[3px] flex h-4 items-center justify-between pr-[18px] pl-1.5">
        <div className="flex items-center gap-2"><Check label="点动时开激光" /><button type="button" aria-label="更多" className="font-bold text-[#1c1c90]">···</button></div>
        <div className="flex items-center"><span>点射功率：</span><Drop label="点射功率" value="100%" size="w-[43px]" /></div>
      </div>

      <div className="mt-[23px] mr-[10px] ml-1 grid grid-cols-3 gap-x-1 gap-y-0.5">
        <Btn h="h-[19px]">标记坐标</Btn>
        <Btn h="h-[19px]">返回标记</Btn>
        <Btn h="h-[19px]"><i className="mr-1 h-2 w-[11px] rounded-xs border border-[#2c58b8] bg-[#70a4f0]" />标记1<Caret /></Btn>
        {["光闸", "红光", "激光", "跟随", "吹气"].map((t) => <Btn key={t} h="h-[22px]"><Lamp />{t}</Btn>)}
        <Btn h="h-[22px]">低压气<span className="ml-2"><Caret /></span></Btn>
      </div>

      <h2 className="mt-2 flex items-center gap-1 pl-[5px] after:h-px after:flex-1 after:bg-[#d8d8d8]">加工控制</h2>
      <div className="mt-1.5 mr-[9px] ml-[5px] grid grid-cols-3 gap-x-1 gap-y-[3px]">
        <Btn><Icon w={7} h={11} className="mr-3"><path d="M0 0l6 5.500-6 5.500z" fill="#1058b8" /></Icon>开始*</Btn>
        <Btn off><Icon w={9} h={9} className="mr-3"><path d="M1 0h2v9h-2zM5 0h2v9h-2z" fill="#a8a8a8" /></Icon>暂停</Btn>
        <Btn><Icon w={13} h={13} className="mr-2"><circle cx="6.500" cy="6.500" r="6" fill="#d01818" /><path d="M4 4l5 5m0-5l-5 5" stroke="#fff" strokeWidth="2" /></Icon>停止</Btn>
        <Btn><Icon w={14} h={14} className="mr-1"><rect x="1" y="2" width="11" height="11" fill="#e0e4ff" stroke="#8088e0" /><circle cx="7" cy="8" r="3" fill="#4858d8" /><path d="M5 2h4l-2-2" fill="#222" /></Icon>走边框</Btn>
        <Btn><Icon w={8} h={11} className="mr-3"><path d="M1 1l5 4.500-5 4.500z" stroke="#186018" strokeWidth="1.500" /></Icon>模拟</Btn>
        <Btn><Icon w={8} h={11} className="mr-3"><path d="M1 1l5 4.500-5 4.500z" stroke="#3868c8" strokeWidth="1.500" /></Icon>空走</Btn>
        <Btn><Icon w={13} h={12}><path d="M5 2h-3v7h3M8 10h3v-7h-3M4 0l3 2-3 2M9 8l-3 2 3 2" stroke="#30a040" strokeWidth="1.500" /></Icon>循环加工</Btn>
        <Btn off><Icon w={12} h={9}><path d="M0 4.500h6M4 2l3 2.500-3 2.500M9 1v7M11 1v7" stroke="#a0a0a0" /></Icon>断点定位</Btn>
        <Btn off><Icon w={11} h={9}><path d="M1 1v7M4 1v7" stroke="#a0a0a0" strokeWidth="1.500" /><path d="M6 1l5 3.500-5 3.500z" fill="#a0a0a0" /></Icon>断点继续</Btn>
        <Btn off><Icon w={12} h={11}><path d="M6 0v11l-6-5.500zM12 1v9l-5-4.500z" fill="#c0c0c0" stroke="#a4a4a4" /></Icon>回退</Btn>
        <Btn off><Icon w={12} h={11}><path d="M6 0v11l6-5.500zM0 1v9l5-4.500z" fill="#c0c0c0" stroke="#a4a4a4" /></Icon>前进</Btn>
        <Btn>回零</Btn>
      </div>

      <div className="mt-3 flex justify-between pr-2 pl-[7px]">
        <div>
          <Check label="加工完成自动返回" on />
          <Check label="单击停止自动回零" on />
          <Check label="只加工选中的图形" />
          <Check label="启用软限位保护" />
        </div>
        <span className="relative h-[17px]">
          <select aria-label="返回点" className="h-[17px] w-20 appearance-none border border-[#a0a0a0] bg-linear-to-b from-[#f2f2f2] to-[#dcdcdc] pl-0.5 leading-3"><option>零点</option></select>
          <span className="pointer-events-none absolute top-1.5 right-1"><Caret /></span>
        </span>
      </div>
      <div className="mt-[5px] flex h-[17px] items-center pl-[5px]">
        <span className="w-[87px]">回退、前进距离：</span>
        <Drop label="回退距离" value="10mm" size="w-10" />
        <span className="w-1" />
        <Drop label="回退速度" value="50mm/s" size="w-14" />
      </div>

      <hr className="mt-[11px] border-[#d8d8d8]" />
      <h2 className="mt-1 flex items-center gap-1 pl-[5px] after:h-px after:flex-1 after:bg-[#d8d8d8]">加工计数</h2>
      <div className="flex items-end justify-between pr-px pl-[5px]">
        <dl className="grid grid-cols-[54px_auto] pt-[3px] leading-4">
          <dt className="text-right">计时：</dt><dd>1小时29分23秒</dd>
          <dt className="text-right">计件：</dt><dd>0</dd>
          <dt className="text-right">计划数量：</dt><dd>100</dd>
        </dl>
        <button type="button" className="mb-0.5 h-5 w-[63px] rounded-[3px] border border-[#7c7c7c] bg-linear-to-b from-[#f5f5f5] to-[#d8d8d8]">管理</button>
      </div>
    </section>
  );
}

function StatusBar() {
  return (
    <footer className="flex h-[23px] items-center justify-end border-t border-[#9aa0a8] bg-linear-to-b from-[#e0e4e9] to-[#bcc2ca] text-[10px] text-[#34507c]">
      <span className="flex h-full w-[91px] items-center justify-center border-l border-[#aab0b8] text-[#303848]">205.09, 338.16</span>
      <span className="flex h-full w-12 items-center border-l border-[#aab0b8] pl-[3px]">停止</span>
      <button type="button" className="ml-0.5 flex h-[19px] w-[130px] items-center justify-between rounded-[3px] border border-[#8a9098] bg-linear-to-b from-[#f4f4f6] to-[#d4d8de] pr-1 pl-3 text-[#303848]">X:57.500 Y:102.650<Caret /></button>
      <label htmlFor="jog" className="ml-2 w-[48px]">微调距离</label>
      <span className="relative">
        <input id="jog" defaultValue="100" className="h-[17px] w-[51px] bg-white px-0.5 text-black" />
        <FaCaretDown size={7} className="absolute top-1.5 right-1 text-[#808080]" />
      </span>
      <span className="w-[70px] pl-1">BMC1204</span>
    </footer>
  );
}

/* ---------- callouts over the window ---------- */
const callouts = [
  { text: "快速访问", x: 394, y: 235, color: "#fff4d8", from: [392, 230], to: [374, 230] },
  { text: "菜单", x: 524, y: 258, color: "#e81010", from: [517, 254], to: [469, 254] },
  { text: "版本号", x: 750, y: 257, color: "#0000e0" },
  { text: "关于界面", x: 973, y: 260, color: "#e81010", from: [1027, 259], to: [1060, 259] },
  { text: "工具栏", x: 286, y: 447, color: "#ff0000", from: [303.5, 430], to: [303.5, 352] },
  { text: "绘图工具栏", x: 277, y: 481, color: "#ffff40", from: [271, 481], to: [218, 482], line: "#ffff00" },
  { text: "（左侧工具栏）", x: 265, y: 496, color: "#ffff40" },
  { text: "图层工具栏", x: 707, y: 456, color: "#ffff40", from: [778, 459.5], to: [823, 459], line: "#ffff00" },
  { text: "（右侧工具栏）", x: 694, y: 471, color: "#ffff40" },
  { text: "控制台", x: 736, y: 772, color: "#e81010", from: [777, 767.5], to: [849, 767.5] },
  { text: "绘图/系统/报警窗口", x: 331, y: 783, color: "#ff0000", from: [375.5, 791], to: [375.5, 858] },
  { text: "鼠标位置", x: 660, y: 954, color: "#e81010", from: [683, 940], to: [683, 922] },
  { text: "加工状态", x: 720, y: 954, color: "#e81010", from: [741, 940], to: [741, 922] },
  { text: "激光头位置", x: 803, y: 955, color: "#e81010", from: [833, 940], to: [833, 922] },
  { text: "微调距离", x: 926, y: 954, color: "#e81010", from: [950, 940], to: [950, 922] },
  { text: "控制卡型号", x: 1013, y: 952, color: "#e81010", from: [1041, 938], to: [1041, 921] },
];

function arrowHead([x1, y1], [x2, y2]) {
  const a = (Math.atan2(y2 - y1, x2 - x1) * 180) / Math.PI;
  return `translate(${x2} ${y2}) rotate(${a})`;
}

function Callouts() {
  return (
    <svg viewBox="187 217 903 745" className="pointer-events-none absolute top-0 left-0 w-full" fill="none" fontSize="12" fontWeight="700">
      <g className="drop-shadow-[1px_2px_1px_rgba(0,0,0,0.35)]">
        <rect x="215" y="219.500" width="153" height="22" rx="11" stroke="#fbeebc" strokeWidth="2.500" />
        <path d="M701 239.500h49" stroke="#f8f8c0" strokeWidth="3" />
        <circle cx="1072.500" cy="254" r="12" stroke="#f00" strokeWidth="3" />
        {callouts.filter((c) => c.from).map((c) => (
          <g key={`${c.text}-arrow`}>
            <path d={`M${c.from}L${c.to}`} stroke={c.line || c.color} strokeWidth="2" />
            <path d="M1 0l-8-4v8z" fill={c.line || c.color} transform={arrowHead(c.from, c.to)} />
          </g>
        ))}
      </g>
      <rect x="193" y="243.500" width="269" height="24" stroke="#f00" strokeWidth="2" />
      <rect x="194" y="268.500" width="890" height="81" rx="18" stroke="#f00" strokeWidth="2" />
      <path d="M205 349.500H1072" stroke="#f00" strokeWidth="3" />
      <rect x="192.500" y="347.500" width="23" height="386" rx="11.500" stroke="#0a0af0" strokeWidth="2" />
      <rect x="828.500" y="353.500" width="23" height="405" rx="11.500" stroke="#0a0af0" strokeWidth="2" />
      <rect x="853" y="353.500" width="231" height="552" rx="18" stroke="#f00" strokeWidth="2" />
      {callouts.map((c) => <text key={c.text + c.x} x={c.x} y={c.y} fill={c.color}>{c.text}</text>)}
    </svg>
  );
}

export default function App() {
  return (
    <div className="bg-white pt-[89px] pb-16 font-['Liberation_Sans','Noto_Sans_CJK_SC',sans-serif]">
      <div className="mr-[187px] ml-[176px] flex h-[62px] items-start justify-between">
        <div className="h-[59px] w-[113px] bg-[#c00000]" />
        <Icon w={55} h={54} className="mr-[19px]">
          <circle cx="27.500" cy="27" r="27" fill="#3f3768" />
          <path d="M33 1C26 6 17 14 17 20C17 26 27 28 26 32C25 36 22 38 18 40C12 39 6 39 2 37C4 40 6 41 8 42C18 41 24 42 31 45C37 48 44 46 50 41C52 39 53 37 54 34C48 41 42 43 36 42C32 41 28 40 24 40C29 37 32 33 32 28C31 23 22 21 23 16C24 10 29 5 33 1Z" fill="#fff" />
        </Icon>
      </div>
      <div className="mr-[187px] -mt-px ml-[187px] h-px bg-black" />

      <main className="relative mt-[66px] mr-[150px] ml-[187px] pb-7">
        <div className="overflow-hidden rounded-t-lg rounded-b-md bg-[linear-gradient(#a8bacb_0%,#a8bacb_27%,#5aa8d4_28%,#7cc8e8_60%,#58b0dc_100%)]">
          <TitleBar />
          <div className="bg-[linear-gradient(90deg,transparent_0,transparent_50%,#a4b8cc_50%)]">
            <div className="bg-[linear-gradient(transparent_25%,#2c64a0_25%)] bg-[position:right] bg-[length:7px_100%] bg-no-repeat px-[7px]">
              <MenuTabs />
              <Ribbon />
              <div className="flex">
                <ToolBar />
                <div className="flex min-w-0 flex-1 flex-col">
                  <div className="flex">
                    <div className="min-w-0 flex-1"><Drawing /></div>
                    <div className="flex w-[15px] flex-col items-center justify-between bg-[#efeff0] pt-2.5 pb-1.5">
                      <Icon w={6} h={4}><path d="M0 4h6l-3-4z" fill="#888" /></Icon>
                      <Icon w={6} h={4}><path d="M0 0h6l-3 4z" fill="#888" /></Icon>
                    </div>
                  </div>
                  <Console />
                </div>
                <LayerBar />
                <ControlPanel />
              </div>
              <StatusBar />
            </div>
          </div>
          <div className="h-1.5 border-b border-[#0c2c50] bg-linear-to-r from-[#60b8e0] via-[#3c80b8] to-[#2c64a0]" />
        </div>
        <Callouts />
      </main>
    </div>
  );
}
